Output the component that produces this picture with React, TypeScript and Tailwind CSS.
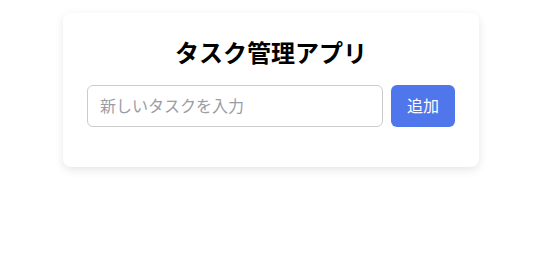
import { useState } from "react";

export default function App() {
  const [text, setText] = useState("");

  return (
    <div
      className="min-h-screen bg-white pt-[13px] pl-[63px]"
      style={{ fontFamily: '"Noto Sans", "Noto Sans CJK JP", sans-serif' }}
    >
      <div className="w-[416px] rounded-lg bg-white p-6 pb-10 shadow-[0_3px_10px_rgba(0,0,0,0.1)]">
        <h1 className="mb-4 text-center text-2xl leading-8 font-bold text-black">タスク管理アプリ</h1>
        <form
          onSubmit={(e) => {
            e.preventDefault();
            setText("");
          }}
          className="flex gap-2"
        >
          <input
            type="text"
            placeholder="新しいタスクを入力"
            value={text}
            onChange={(e) => setText(e.target.value)}
            className="h-[42px] flex-1 rounded-md border border-[#cccccc] px-3 text-base text-black placeholder:text-[#9a9ca6] focus:outline-none"
          />
          <button
            type="submit"
            className="h-[42px] w-16 rounded-md bg-[#5076ec] text-base text-white"
          >
            追加
          </button>
        </form>
      </div>
    </div>
  );
}
